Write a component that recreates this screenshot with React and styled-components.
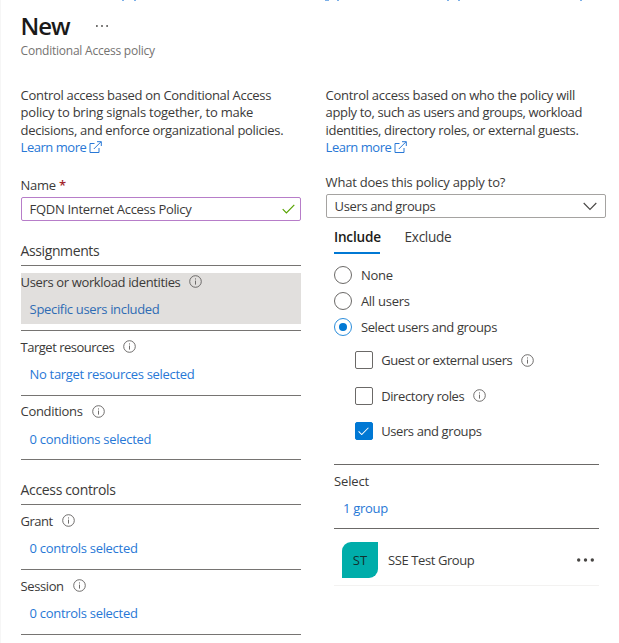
import React from 'react';
import styled, { createGlobalStyle } from 'styled-components';

const GlobalStyle = createGlobalStyle`
  * { box-sizing: border-box; }
  body {
    margin: 0;
    background: #fff;
    color: #3b3a39;
    font-family: "Open Sans", "Noto Sans", sans-serif;
    font-size: 13px;
    line-height: 18px;
  }
`;

const Page = styled.main`
  width: 619px;
  height: 643px;
  overflow: hidden;
  border-left: 1px solid #f6f6f6;
`;

const ClippedTrail = styled.svg`
  display: block;
  height: 2px;
  width: 618px;
`;

const Header = styled.header`
  height: 85px;
  padding: 7px 0 0 19.6px;
`;

const TitleRow = styled.div`
  display: flex;
  align-items: center;
  gap: 26px;
  height: 33px;
`;

const Title = styled.h1`
  margin: 0;
  font-size: 24px;
  font-weight: 600;
  line-height: 32px;
  letter-spacing: -1.05px;
  color: #1b1a19;
`;

const Subtitle = styled.div`
  font-size: 12px;
  line-height: 16px;
  padding-top: 1px;
  letter-spacing: -0.23px;
  color: #757371;
`;

const Columns = styled.div`
  display: grid;
  grid-template-columns: 280px 280px;
  column-gap: 25px;
  padding-left: 19.6px;
`;

const Column = styled.section`
  min-width: 0;
`;

const Text = styled.span`
  white-space: nowrap;
  letter-spacing: ${(p) => p.$track ?? -0.3}px;
`;

const Description = styled.div`
  display: flex;
  flex-direction: column;
  line-height: 17.33px;
`;

const Link = styled.a`
  display: flex;
  align-items: center;
  gap: 2.5px;
  color: #2878d6;
  text-decoration: none;
`;

const FieldLabel = styled.label`
  display: block;
  margin-top: ${(p) => p.$top}px;
  height: 18px;
`;

const Required = styled.span`
  color: #a4262c;
  font-weight: 600;
`;

const Field = styled.div`
  display: flex;
  align-items: center;
  justify-content: space-between;
  height: 24px;
  margin-top: 3px;
  padding: 0 ${(p) => (p.$edited ? 5 : 8)}px 0 8px;
  border: 1px solid ${(p) => (p.$edited ? '#b77dc9' : '#a5a3a1')};
  border-radius: 2px;
`;

const SectionTitle = styled.h2`
  margin: ${(p) => p.$top}px 0 0;
  height: 24px;
  font-size: 14px;
  font-weight: 400;
  line-height: 18px;
  border-bottom: 1px solid #767472;
`;

const Assignment = styled.div`
  height: 64.67px;
  padding: 7px 0 6px;
  border-bottom: 1px solid #767472;
`;

const AssignmentBody = styled.div`
  height: 50.6px;
  background: ${(p) => (p.$active ? '#e1dfdd' : 'transparent')};
`;

const LabelLine = styled.div`
  display: flex;
  align-items: center;
  gap: 9px;
  height: 17.3px;
`;

const ValueLink = styled.a`
  display: block;
  padding: 9.7px 0 0 9px;
  height: 27.7px;
  color: ${(p) => (p.$active ? '#2f6cb4' : '#2878d6')};
`;

const TabList = styled.div`
  display: flex;
  gap: 24.6px;
  margin: 10px 0 0 8.4px;
  font-size: 13.6px;
`;

const Tab = styled.div`
  width: 46px;
  height: 26px;
  font-weight: ${(p) => (p.$selected ? 600 : 400)};
  color: ${(p) => (p.$selected ? '#1b1a19' : '#3b3a39')};
  border-bottom: 2px solid ${(p) => (p.$selected ? '#0078d4' : 'transparent')};
`;

const RadioList = styled.div`
  display: flex;
  flex-direction: column;
  gap: 8px;
  margin: 12px 0 0 8.7px;
`;

const Option = styled.label`
  display: flex;
  align-items: center;
  gap: 8.6px;
  height: 18px;
`;

const Radio = styled.span`
  display: grid;
  place-items: center;
  width: 18px;
  height: 18px;
  border: 1px solid ${(p) => (p.$checked ? '#2b8ddb' : '#6b6967')};
  border-radius: 50%;

  &::after {
    content: '';
    width: 8px;
    height: 8px;
    border-radius: 50%;
    background: ${(p) => (p.$checked ? '#0078d4' : 'transparent')};
  }
`;

const CheckList = styled.div`
  display: flex;
  flex-direction: column;
  gap: 17.4px;
  margin: 15px 0 0 29px;
`;

const Checkbox = styled.span`
  display: grid;
  place-items: center;
  width: 18px;
  height: 18px;
  border: 1px solid ${(p) => (p.$checked ? '#0078d4' : '#6b6967')};
  border-radius: 2px;
  background: ${(p) => (p.$checked ? '#0078d4' : '#fff')};
`;

const Selection = styled.div`
  width: 265px;
  height: 65px;
  margin: 24.4px 0 0 8.4px;
  padding-top: 7px;
  border-top: 1px solid #6b6967;
  border-bottom: 1px solid #6b6967;
`;

const GroupRow = styled.div`
  display: flex;
  align-items: center;
  width: 265px;
  height: 57px;
  margin-left: 8.4px;
  padding: 7px 5px 2px 8px;
  border-bottom: 1px solid #f3f2f1;
`;

const Avatar = styled.div`
  display: grid;
  place-items: center;
  width: 36px;
  height: 36px;
  margin-right: 10px;
  border-radius: 9px 0 9px 0;
  background: #00adaa;
  color: #12302f;
`;

const Spacer = styled.div`
  flex: 1;
`;

const InfoIcon = () => (
  <svg width="13" height="13" viewBox="0 0 13 13" fill="none" stroke="#605e5c">
    <circle cx="6.5" cy="6.5" r="5.8" strokeWidth="0.9" />
    <path d="M6.5 5.6v4M6.5 3.4v1.1" strokeWidth="0.9" />
  </svg>
);

const ExternalIcon = () => (
  <svg width="13" height="13" viewBox="0 0 13 13" fill="none" stroke="#2878d6">
    <path d="M5.5 2.5h-4.5v9h9V7M4.8 8 12 .8M8 .7h4.3V5" />
  </svg>
);

const CheckIcon = ({ color, width = 13 }) => (
  <svg width={width} height={width * 0.77} viewBox="0 0 13 10" fill="none" stroke={color} strokeWidth="1.2">
    <path d="M.7 5.2 4.4 8.9 12.3.9" />
  </svg>
);

const ChevronIcon = () => (
  <svg width="14" height="9" viewBox="0 0 14 9" fill="none" stroke="#484644" strokeWidth="1.1">
    <path d="M.7 1 7 7.4 13.3 1" />
  </svg>
);

const MoreIcon = ({ width, r, color }) => (
  <svg width={width} height="4" viewBox={`0 0 ${width} 4`} fill={color}>
    <circle cx={r} cy="2" r={r} />
    <circle cx={width / 2} cy="2" r={r} />
    <circle cx={width - r} cy="2" r={r} />
  </svg>
);

const LearnMore = () => (
  <Link>
    <Text $track={-0.47}>Learn more</Text>
    <ExternalIcon />
  </Link>
);

const AssignmentRow = ({ label, track, value, valueTrack, active }) => (
  <Assignment>
    <AssignmentBody $active={active}>
      <LabelLine>
        <Text $track={track}>{label}</Text>
        <InfoIcon />
      </LabelLine>
      <ValueLink $active={active}>
        <Text $track={valueTrack}>{value}</Text>
      </ValueLink>
    </AssignmentBody>
  </Assignment>
);

const RadioOption = ({ label, track, checked }) => (
  <Option>
    <Radio $checked={checked} />
    <Text $track={track}>{label}</Text>
  </Option>
);

const CheckOption = ({ label, track, checked, info }) => (
  <Option>
    <Checkbox $checked={checked}>{checked && <CheckIcon color="#fff" width={11} />}</Checkbox>
    <Text $track={track}>{label}</Text>
    {info && <InfoIcon />}
  </Option>
);

export default function App() {
  return (
    <>
      <GlobalStyle />
      <Page>
        <ClippedTrail viewBox="0 0 618 2" fill="#7db0e8">
          {[121, 133, 324, 336, 446, 457, 579].map((x, i) => (
            <rect key={x} x={x} y="0" width={i === 2 ? 4 : 2} height="1" />
          ))}
        </ClippedTrail>
        <Header>
          <TitleRow>
            <Title>New</Title>
            <MoreIcon width={12} r={0.9} color="#484644" />
          </TitleRow>
          <Subtitle>Conditional Access policy</Subtitle>
        </Header>
        <Columns>
          <Column>
            <Description>
              <Text $track={-0.31}>Control access based on Conditional Access</Text>
              <Text $track={-0.225}>policy to bring signals together, to make</Text>
              <Text $track={-0.315}>decisions, and enforce organizational policies.</Text>
              <LearnMore />
            </Description>
            <FieldLabel $top={20}>
              <Text $track={-0.33}>Name</Text> <Required>*</Required>
            </FieldLabel>
            <Field $edited>
              <Text $track={-0.31}>FQDN Internet Access Policy</Text>
              <CheckIcon color="#57a300" />
            </Field>
            <SectionTitle $top={21}>
              <Text $track={-0.4}>Assignments</Text>
            </SectionTitle>
            <AssignmentRow active label="Users or workload identities" track={-0.36} value="Specific users included" valueTrack={-0.33} />
            <AssignmentRow label="Target resources" track={-0.5} value="No target resources selected" valueTrack={-0.32} />
            <AssignmentRow label="Conditions" track={-0.32} value="0 conditions selected" valueTrack={-0.28} />
            <SectionTitle $top={21}>
              <Text $track={-0.35}>Access controls</Text>
            </SectionTitle>
            <AssignmentRow label="Grant" track={-0.52} value="0 controls selected" valueTrack={-0.3} />
            <AssignmentRow label="Session" track={-0.41} value="0 controls selected" valueTrack={-0.3} />
          </Column>
          <Column>
            <Description>
              <Text $track={-0.275}>Control access based on who the policy will</Text>
              <Text $track={-0.36}>apply to, such as users and groups, workload</Text>
              <Text $track={-0.345}>identities, directory roles, or external guests.</Text>
              <LearnMore />
            </Description>
            <FieldLabel $top={17}>
              <Text $track={-0.21}>What does this policy apply to?</Text>
            </FieldLabel>
            <Field>
              <Text $track={-0.37}>Users and groups</Text>
              <Spacer />
              <ChevronIcon />
            </Field>
            <TabList>
              <Tab $selected>
                <Text $track={-0.2}>Include</Text>
              </Tab>
              <Tab>
                <Text $track={-0.3}>Exclude</Text>
              </Tab>
            </TabList>
            <RadioList>
              <RadioOption label="None" track={-0.22} />
              <RadioOption label="All users" track={-0.26} />
              <RadioOption checked label="Select users and groups" track={-0.36} />
            </RadioList>
            <CheckList>
              <CheckOption info label="Guest or external users" track={-0.46} />
              <CheckOption info label="Directory roles" track={-0.4} />
              <CheckOption checked label="Users and groups" track={-0.4} />
            </CheckList>
            <Selection>
              <LabelLine>
                <Text $track={-0.14}>Select</Text>
              </LabelLine>
              <ValueLink>
                <Text $track={-0.28}>1 group</Text>
              </ValueLink>
            </Selection>
            <GroupRow>
              <Avatar>
                <Text $track={0}>ST</Text>
              </Avatar>
              <Text $track={-0.4}>SSE Test Group</Text>
              <Spacer />
              <MoreIcon width={17} r={1.7} color="#484644" />
            </GroupRow>
          </Column>
        </Columns>
      </Page>
    </>
  );
}
